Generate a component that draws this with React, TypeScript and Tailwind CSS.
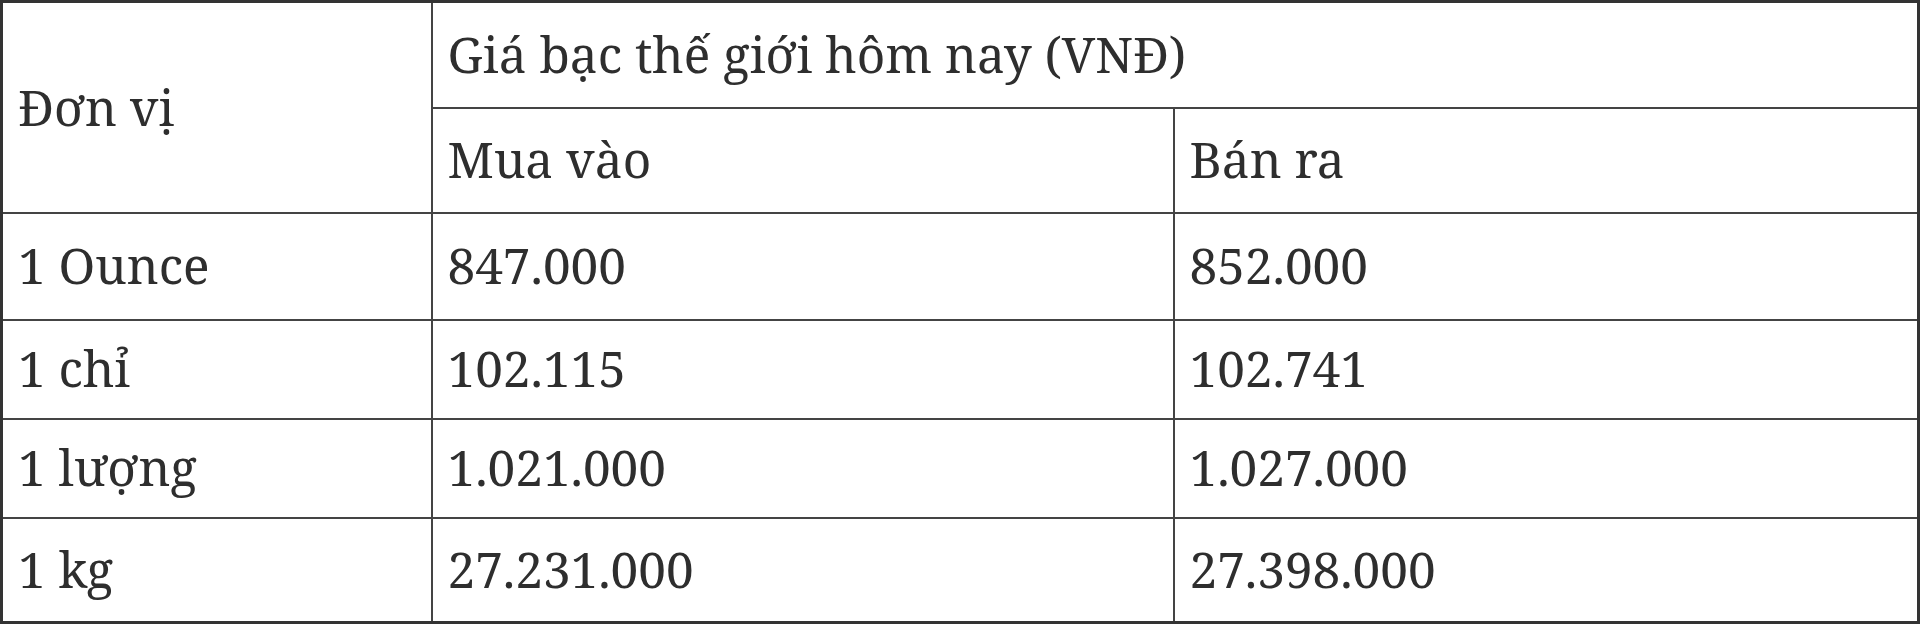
import React from "react";

const rows: { unit: string; buy: string; sell: string; h: string }[] = [
  { unit: "1 Ounce", buy: "847.000", sell: "852.000", h: "h-[107px]" },
  { unit: "1 chỉ", buy: "102.115", sell: "102.741", h: "h-[99px]" },
  { unit: "1 lượng", buy: "1.021.000", sell: "1.027.000", h: "h-[99px]" },
  { unit: "1 kg", buy: "27.231.000", sell: "27.398.000", h: "h-[105px]" },
];

const cell = "border-2 border-[#444] px-[15px] text-left align-middle font-normal";

export default function App() {
  return (
    <div className="w-[1920px] bg-white">
      <table
        className="w-[1920px] border-collapse border-[3px] border-[#333] text-[#2e2e2e] text-[49.5px] leading-[1.2] font-stretch-condensed"
        style={{ fontFamily: '"Noto Serif", "DejaVu Serif Condensed", "DejaVu Serif", serif' }}
      >
        <colgroup>
          <col className="w-[430px]" />
          <col className="w-[742px]" />
          <col />
        </colgroup>
        <thead>
          <tr className="h-[106px]">
            <th rowSpan={2} className={cell}>
              Đơn vị
            </th>
            <th colSpan={2} className={cell}>
              Giá bạc thế giới hôm nay (VNĐ)
            </th>
          </tr>
          <tr className="h-[105px]">
            <th className={cell}>Mua vào</th>
            <th className={cell}>Bán ra</th>
          </tr>
        </thead>
        <tbody>
          {rows.map((r) => (
            <tr key={r.unit} className={r.h}>
              <td className={cell}>{r.unit}</td>
              <td className={cell}>{r.buy}</td>
              <td className={cell}>{r.sell}</td>
            </tr>
          ))}
        </tbody>
      </table>
    </div>
  );
}
